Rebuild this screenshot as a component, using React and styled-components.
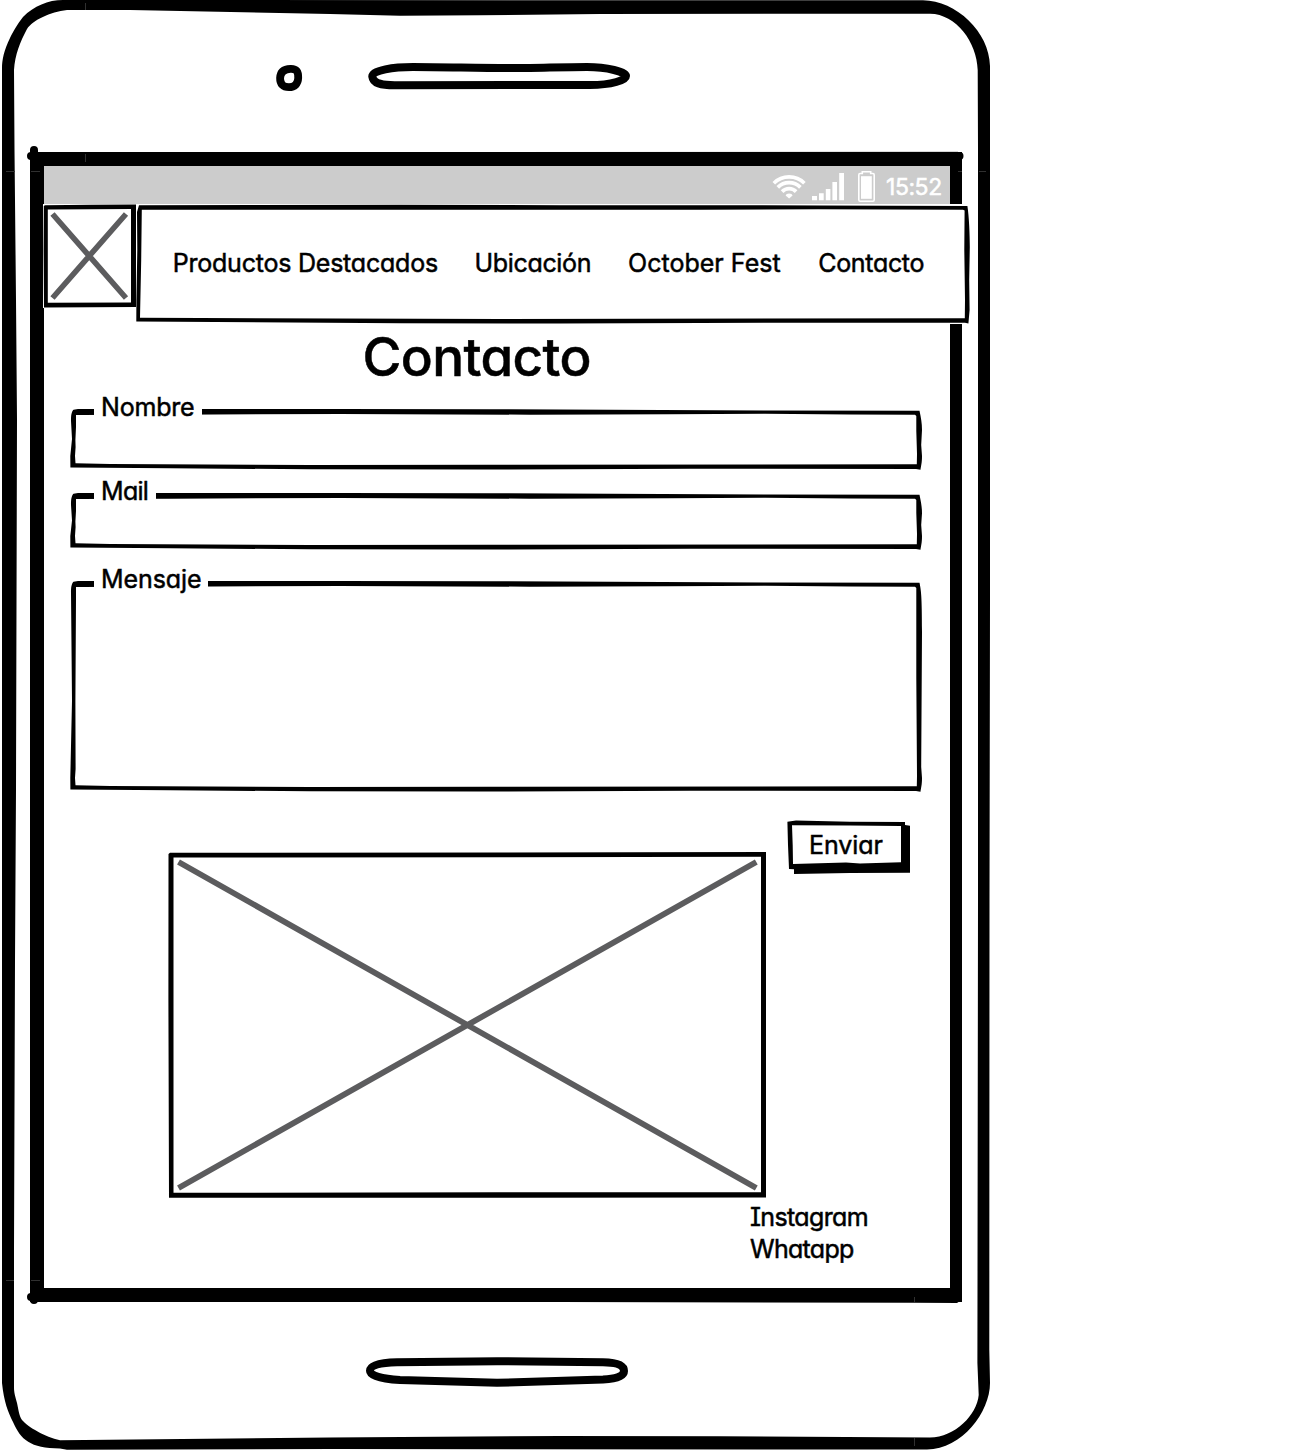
import React from "react";
import styled, { createGlobalStyle } from "styled-components";

const GlobalStyle = createGlobalStyle`
  body {
    margin: 0;
    background: #fff;
    color: #000;
    font-family: Inter, "Liberation Sans", sans-serif;
    font-feature-settings: "cv11" 1, "cv08" 1;
    -webkit-text-stroke: 0.5px currentColor;
  }
`;

const Device = styled.main`
  position: relative;
  box-sizing: border-box;
  width: 992px;
  height: 1450px;
  display: flex;
  flex-direction: column;
  padding-left: 30px;
`;

const Drawing = styled.svg`
  position: absolute;
  inset: 0;
  width: 100%;
  height: 100%;
  overflow: visible;
  pointer-events: none;
`;

const TopBezel = styled.div`
  height: 152px;
  flex: none;
`;

const Screen = styled.section`
  position: relative;
  box-sizing: border-box;
  width: 932px;
  height: 1150px;
  flex: none;
  display: flex;
  flex-direction: column;
  border: solid #000;
  border-width: 14px 12px 14px 14px;
  background: #fff;
`;

const StatusBar = styled.div`
  height: 38px;
  flex: none;
  display: flex;
  justify-content: flex-end;
  padding-right: 8px;
  background: #ccc;
  color: #fff;
`;

const StatusIcons = styled.svg`
  width: 106px;
  height: 38px;
  margin-right: 8px;
`;

const Clock = styled.span`
  width: 56px;
  font-size: 23px;
  line-height: 42px;
  letter-spacing: ${(p) => p.$spacing}px;
  white-space: nowrap;
`;

const Header = styled.header`
  position: relative;
  display: flex;
  flex: none;
  height: 120px;
  margin: 0 -20px 0 -1px;
`;

const Logo = styled.div`
  position: relative;
  width: 93px;
  height: 104px;
  background: #fff;
`;

const Nav = styled.nav`
  position: relative;
  box-sizing: border-box;
  width: 834px;
  height: 120px;
  display: flex;
  align-items: flex-start;
  padding: 43px 0 0 36.7px;
  background: #fff;
`;

const NavLink = styled.a`
  position: relative;
  flex: none;
  width: ${(p) => p.$width}px;
  font-size: 25px;
  line-height: 33px;
  letter-spacing: ${(p) => p.$spacing}px;
  white-space: nowrap;
`;

const Title = styled.h1`
  margin: 2px 0 0;
  height: 60px;
  padding-left: 318.5px;
  font-size: 53px;
  line-height: 62px;
  font-weight: 500;
  letter-spacing: ${(p) => p.$spacing}px;
`;

const Form = styled.form`
  display: flex;
  flex-direction: column;
  padding: 23px 28px 0 26px;
`;

const Field = styled.div`
  position: relative;
  width: 852px;
  height: ${(p) => p.$height}px;
  margin-bottom: ${(p) => p.$gap}px;
`;

const Legend = styled.label`
  position: relative;
  box-sizing: border-box;
  display: block;
  width: ${(p) => p.$width}px;
  height: 32px;
  margin-left: 24px;
  padding-left: 7px;
  top: -18px;
  background: #fff;
  font-size: 25px;
  line-height: 32px;
  letter-spacing: ${(p) => p.$spacing}px;
  white-space: nowrap;
`;

const ActionRow = styled.div`
  display: flex;
  align-items: flex-start;
  gap: 21px;
  padding-left: 98px;
`;

const ImagePlaceholder = styled.div`
  position: relative;
  width: 598px;
  height: 346px;
  margin-top: 31px;
`;

const SubmitButton = styled.button`
  position: relative;
  width: 123px;
  height: 53px;
  padding: 0 0 0 22px;
  border: 0;
  background: transparent;
  color: #000;
  font: inherit;
  font-size: 25px;
  line-height: 48px;
  text-align: left;
  letter-spacing: ${(p) => p.$spacing}px;
`;

const ButtonLabel = styled.span`
  position: relative;
  display: block;
  height: 53px;
`;

const Links = styled.footer`
  display: flex;
  flex-direction: column;
  margin: 3px 0 0 706px;
`;

const SocialLink = styled.a`
  font-size: 25px;
  line-height: 32px;
  letter-spacing: ${(p) => p.$spacing}px;
`;

function DeviceOutline() {
  return (
    <Drawing viewBox="0 0 992 1450" aria-hidden="true">
      <path
        fillRule="evenodd"
        d="M63 0 C48 0 34 6 23 17 C18 23 13 32 10 38 C4 50 2 60 2 68 L2 1383 C4 1402 8 1412 13 1422 C21 1440 30 1448 60 1448.5 L67 1449.8 L330 1449 L927 1449.6 C962 1449 990 1412 990 1383 L989.3 1350 L989.5 900 L990 600 L990 66 C989.5 32 956 0.5 923 0.3 Z
           M67 10 L130 10 L330 14 L400 15.7 L480 15.3 L600 14 L930 13.7 C956 14 977 42 977.7 70 L978 148 L978 900 L977.4 1363 L978.7 1395 C977 1415 955 1437 930 1437.6 L720 1436.2 L560 1436 L330 1437.6 L60 1440.3 C45 1437 28 1427 22 1420 C19 1416 18 1407 17 1403 C15 1396 14 1392 14 1388 L14 1250 L15 960 L16 790 L17 420 L16 300 L14.5 150 L14 70 C15 55 20 42 27 29 C33 20 50 12 67 10 Z"
      />
      <g fill="none" stroke="#000" strokeWidth="8">
        <path d="M280.1 78 C280.3 72 284 69 290.5 68.8 C296.5 68.6 298.4 71.5 298.2 78 C298 84 294.5 87.2 289 87.2 C283 87.2 280 84 280.1 78 Z" strokeWidth="7.8" />
        <path d="M372.3 76.5 C372 70 394 67 413 67 C450 67 490 68.5 530 68 C555 67.5 570 67 587 67 C607 67 626 72 626 76 C626 80 612 85 590 85 L397 85.2 C380 85.5 373 83 372.3 76.5 Z" />
        <path d="M370 1370.7 C370 1365 380 1362.5 397 1362.2 L497 1361.2 L603 1362.3 C617 1362.5 624 1365 624 1371 C624 1377 614 1379 603 1379.6 L497 1382.8 L400 1380 C382 1379 370 1376 370 1370.7 Z" />
      </g>
      <path d="M34 150 V160 M31 156 H40 M959.5 156 H940 M31 1297 H40 M34 1296 V1300" stroke="#000" strokeWidth="8" strokeLinecap="round" fill="none" />
      <path d="M300 1301 L560 1302 L914 1302.8 L957 1303 L960 1301 Z" />
      <path d="M420 152 L958 151.5 V153 H420 Z" fill="#aaa" />
    </Drawing>
  );
}

function BezelSeams() {
  return (
    <Drawing viewBox="0 0 992 1450" aria-hidden="true">
      <path
        d="M85.5 3V10M85.5 154V162M6 171.5H15M31 171.5H40M958 171.5H962M979 171.5H986M6 1280.5H14M31 1280.5H40M914.5 1297V1302M914.5 1438V1446"
        stroke="#303030"
        fill="none"
      />
    </Drawing>
  );
}

function FieldOutline({ height: h }) {
  const b = h - 61;
  return (
    <Drawing viewBox={`0 0 852 ${h}`} aria-hidden="true">
      <path
        fillRule="evenodd"
        d={`M3.5 0.8 L8 0 L270 0 L420 0.2 L695 1.5 L849.5 1.7 C851 9 852 14 852 ${21 + b * 0.2} L851.2 ${36 + b} L852 ${47 + b} C852 ${54 + b} 851 ${57 + b} 850.5 ${60.7 + b} L846 ${59.9 + b} L620 ${59.7 + b} L410 ${60.6 + b} L240 ${60.3 + b} L100 ${59.2 + b} L0.4 ${58.4 + b} L0.3 ${47 + b} L2 ${30 + b * 0.6} L1 12 C1 6 1.5 3 3.5 0.8 Z
            M6 6 L6 18 L5.4 ${31 + b * 0.6} L5.6 ${38 + b} L5 ${47 + b} L5.5 ${54.3 + b} L40 ${55 + b} L240 ${55.9 + b} L420 ${55.8 + b} L846.8 ${55.2 + b} L847 ${45 + b} L846.3 ${22 + b * 0.5} L846.3 7 L845 5.8 L780 5.5 L695 4.8 L600 5.3 L460 5.7 L270 5 L100 5.7 Z`}
      />
    </Drawing>
  );
}

function FormField({ label, height, gap, legendWidth, spacing }) {
  return (
    <Field $height={height} $gap={gap}>
      <FieldOutline height={height} />
      <Legend $width={legendWidth} $spacing={spacing}>
        {label}
      </Legend>
    </Field>
  );
}

function WifiSignalBattery() {
  return (
    <StatusIcons viewBox="772 166 106 38" aria-hidden="true">
      <g fill="none" stroke="#fff" strokeWidth="3.7">
        <path d="M773.8 183.2 A21.8 21.8 0 0 1 804.4 183.2" />
        <path d="M777.8 187.4 A15.8 15.8 0 0 1 800.4 187.4" />
        <path d="M782.1 191.6 A9.8 9.8 0 0 1 796.1 191.6" />
      </g>
      <path d="M789.1 198.4 L785.6 195.4 Q786 193.6 789.1 193.6 Q792.2 193.6 792.6 195.4 Z" fill="#fff" />
      <path d="M812 196h5v4.3h-5z M819 193.2h4.7v7.1h-4.7z M825.8 189h4.6v11.3h-4.6z M832.4 182h4.6v18.3h-4.6z M839.2 173h4.8v27.3h-4.8z" fill="#fff" />
      <path d="M860 173.5 H862.3 V171.8 H870.7 V173.5 H873 Q874.2 173.5 874.2 175 V199.8 Q874.2 201.2 873 201.2 H860 Q858.8 201.2 858.8 199.8 V175 Q858.8 173.5 860 173.5 Z" fill="none" stroke="#fff" strokeWidth="1.6" />
      <path d="M861 176.2h10.8v22.6h-10.8z" fill="#fff" />
    </StatusIcons>
  );
}

function LogoMark() {
  return (
    <Drawing viewBox="43 204 93 104" aria-hidden="true">
      <path fillRule="evenodd" d="M45 205.3 L90 204.8 L136 204.6 L136 307 L44 307.6 L43.6 250 L43.8 206 Z M47.8 209.5 L47.8 302.8 L131 302.5 L131 209 Z" />
      <path d="M52.5 214 L126 298 M126 214 L52.5 298" stroke="#5c5c5e" strokeWidth="5.6" />
    </Drawing>
  );
}

function NavOutline() {
  return (
    <Drawing viewBox="136 204 834 120" aria-hidden="true">
      <path
        fillRule="evenodd"
        d="M139 205.2 L400 204.8 L560 205.2 L820 205.4 L967.4 206 C969 216 969.8 235 969.8 247 L969.2 280 L969.6 310 L968.4 323.5 L965 322.7 L700 322.9 L560 323.6 L400 323.3 L136.3 321.4 L136.4 300 L137.3 250 L137 212 Z
           M141.8 209.7 L141.2 260 L140 317.8 L200 318 L500 319 L964.8 318.3 L965 300 L964.3 250 L964.6 210.5 L963 209.7 L818 209.3 L700 209.8 L400 209.7 Z"
      />
    </Drawing>
  );
}

function ImageCross() {
  return (
    <Drawing viewBox="168 852 598 346" aria-hidden="true">
      <path fillRule="evenodd" d="M170 852.8 L500 852.4 L766 852 V1197.5 L169 1197.8 L168.4 1000 L168.5 854 Z M173.5 857.5 V1192.8 L500 1192.3 L761 1192.3 V856.8 L500 857.2 Z" />
      <path d="M178.5 862 L756.3 1188 M756.3 862 L178.5 1188" stroke="#5c5c5e" strokeWidth="5.8" />
    </Drawing>
  );
}

function ButtonOutline() {
  return (
    <Drawing viewBox="787 821 123 53" aria-hidden="true">
      <path
        fillRule="evenodd"
        d="M787.4 821.8 L796 820.6 L850 821.7 L905 822 V825 L910 825.8 V872.8 L850 873 L794 874 V869.3 L789 869 L788 845 Z M792 825.2 L792.7 845 L793 864 L846 862.6 L860 863.5 L901 862.3 V826 L850 825.5 Z"
      />
    </Drawing>
  );
}

const NAV_ITEMS = [
  { label: "Productos Destacados", width: 301.8, spacing: -0.22 },
  { label: "Ubicación", width: 153.5, spacing: -0.33 },
  { label: "October Fest", width: 190.3, spacing: 0.03 },
  { label: "Contacto", width: 110, spacing: -0.33 },
];

export default function App() {
  return (
    <>
      <GlobalStyle />
      <Device>
        <DeviceOutline />
        <TopBezel />
        <Screen>
          <StatusBar>
            <WifiSignalBattery />
            <Clock $spacing={-0.45}>15:52</Clock>
          </StatusBar>
          <Header>
            <Logo>
              <LogoMark />
            </Logo>
            <Nav>
              <NavOutline />
              {NAV_ITEMS.map((item) => (
                <NavLink key={item.label} $width={item.width} $spacing={item.spacing}>
                  {item.label}
                </NavLink>
              ))}
            </Nav>
          </Header>
          <Title $spacing={-0.6}>Contacto</Title>
          <Form>
            <FormField label="Nombre" height={61} gap={23} legendWidth={108} spacing={-0.2} />
            <FormField label="Mail" height={57} gap={31} legendWidth={62} spacing={-0.7} />
            <FormField label="Mensaje" height={211} gap={29} legendWidth={114} spacing={-0.1} />
            <ActionRow>
              <ImagePlaceholder>
                <ImageCross />
              </ImagePlaceholder>
              <SubmitButton type="button" $spacing={-0.05}>
                <ButtonOutline />
                <ButtonLabel>Enviar</ButtonLabel>
              </SubmitButton>
            </ActionRow>
          </Form>
          <Links>
            <SocialLink $spacing={-0.65}>Instagram</SocialLink>
            <SocialLink $spacing={-0.7}>Whatapp</SocialLink>
          </Links>
        </Screen>
        <BezelSeams />
      </Device>
    </>
  );
}
